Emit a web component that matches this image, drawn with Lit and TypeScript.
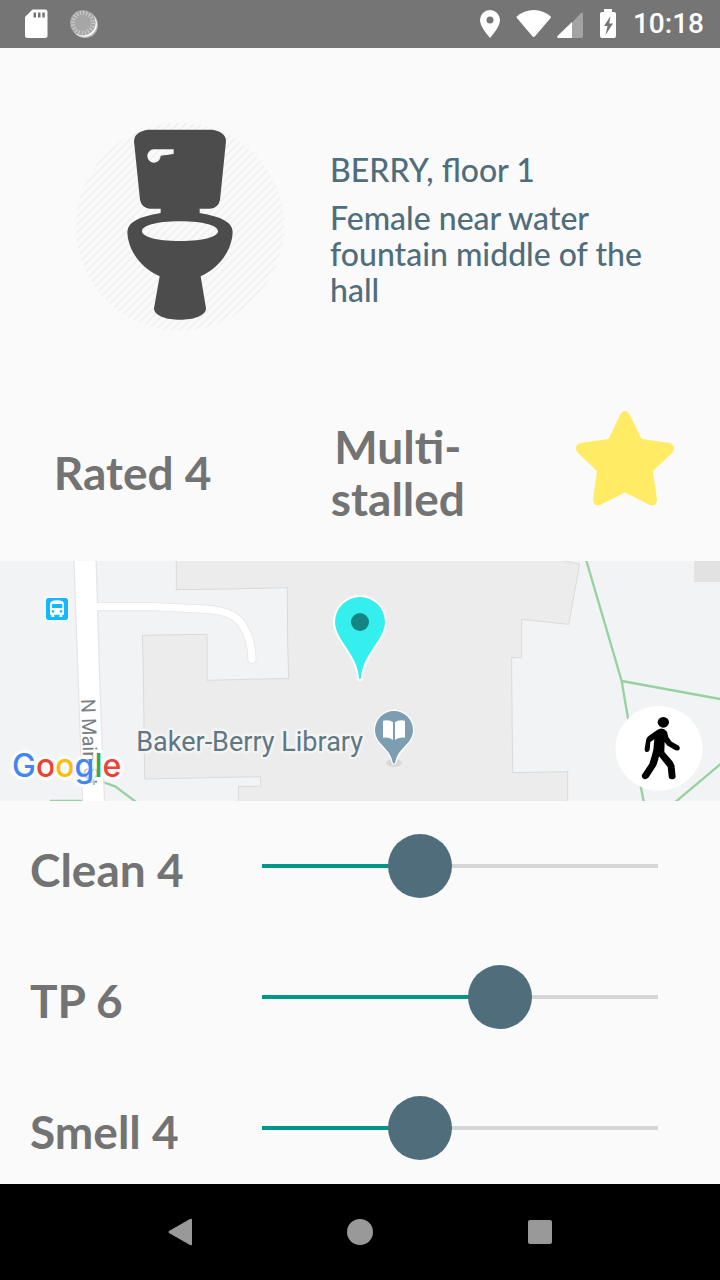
import { LitElement, html, css } from "lit";
import { customElement, property, state } from "lit/decorators.js";

@customElement("status-bar")
class StatusBar extends LitElement {
  static styles = css`
    :host {
      display: flex;
      align-items: center;
      height: 48px;
      flex: none;
      padding: 0 16px 0 24px;
      background: #757575;
      color: #fff;
      font: 500 28px/48px Roboto, sans-serif;
    }
    .group {
      display: flex;
      align-items: center;
    }
    .left {
      gap: 22px;
      flex: 1;
    }
    .signals {
      gap: 16px;
    }
    .network {
      display: flex;
      gap: 5px;
    }
    svg {
      display: block;
    }
  `;
  render() {
    return html`
      <div class="group left">
        <svg width="24" height="30" viewBox="0 0 24 30" fill="#fff">
          <path d="M8.500 0.500H21Q23.500 0.500 23.500 3V26.500Q23.500 29 21 29H3.500Q1 29 1 26.500V8Z" />
          <path d="M9.500 3.500h2.500v5H9.500zM14 3.500h2.500v5H14zM18.300 3.500h2.500v5h-2.500z" fill="#757575" />
        </svg>
        <svg width="28" height="30" viewBox="0 0 28 30">
          <circle cx="15" cy="16" r="13" fill="#bbb" />
          <circle cx="14" cy="15" r="12.800" fill="#fff" />
          <circle cx="12.800" cy="13.800" r="12.800" fill="#a6a6a6" />
          <circle cx="12.800" cy="13.800" r="10" fill="none" stroke="#d2d2d2" stroke-width="4" stroke-dasharray="1 2.142" />
        </svg>
      </div>
      <div class="group signals">
        <svg width="20" height="28" viewBox="0 0 20 28" fill="#fff">
          <path fill-rule="evenodd" d="M10 0A10 10 0 0 1 20 10C20 16 14 23 10 28C6 23 0 16 0 10A10 10 0 0 1 10 0ZM10 6.500a3.500 3.500 0 1 0 0 7a3.500 3.500 0 1 0 0-7Z" />
        </svg>
        <div class="network">
          <svg width="36" height="28" viewBox="0 0 36 28" fill="#fff">
            <path d="M0.800 6.500Q8 0 17.700 0T34.700 6.500Q35.300 7.200 34.600 8L19 26.300Q17.700 27.500 16.400 26.300L0.900 8Q0.200 7.200 0.800 6.500Z" />
          </svg>
          <svg width="26" height="28" viewBox="0 0 26 28">
            <path d="M15 12.500L24 3Q26 1.600 26 4V26Q26 28 24.500 28H15Z" fill="#a3a3a3" />
            <path d="M15 12V28H1Q-0.500 27.500 0.500 26Z" fill="#fff" />
          </svg>
        </div>
        <svg width="18" height="30" viewBox="0 0 18 30">
          <path d="M5 0H13V3H15Q17 3 17 5V27Q17 29 15 29H3Q1 29 1 27V5Q1 3 3 3H5Z" fill="#fff" />
          <path d="M11.500 7L5 17H8.500L6.500 26L14 14.500H10.200Z" fill="#757575" />
        </svg>
        <time>10:18</time>
      </div>
    `;
  }
}

@customElement("campus-map")
class CampusMap extends LitElement {
  static styles = css`
    :host {
      display: block;
      position: relative;
      height: 240px;
      overflow: hidden;
      background: #f2f3f5;
    }
    .map {
      display: block;
      width: 100%;
      height: 100%;
    }
    .place,
    .street,
    .brand {
      paint-order: stroke;
      stroke-linejoin: round;
    }
    .place {
      font: 400 27px Roboto, sans-serif;
      fill: #5f7784;
      stroke: #f4f4f4;
      stroke-width: 5px;
    }
    .street {
      font: 400 20px Roboto, sans-serif;
      fill: #7b8083;
      stroke: #fff;
      stroke-width: 3px;
    }
    .brand {
      font: 500 32px Inter, sans-serif;
      stroke: #fff;
      stroke-opacity: 0.6;
      stroke-width: 7px;
    }
    .walk {
      position: absolute;
      right: 17px;
      bottom: 10px;
      padding: 0;
      border: 0;
      background: none;
      cursor: pointer;
    }
    .walk svg {
      display: block;
    }
  `;
  render() {
    return html`
      <svg class="map" viewBox="0 0 720 240" preserveAspectRatio="xMidYMid slice" role="img" aria-label="Map of Baker-Berry Library">
        <g transform="scale(0.333333) translate(0 -18)">
          <path d="M529 10V104L678 102L825 99L862 98L863 260L866 370L621 376V238L427 241L430 342L434 672L782 665V694H715V750H1703V650L1538 653L1535 366V308H1565V193L1706 208L1739 27L1690 16Z" fill="#ececec" stroke="#d9dadb" stroke-width="3" />
          <path d="M2082 0H2170V81H2082Z" fill="#e2e2e2" />
          <g fill="none" stroke="#97d1a1" stroke-width="7">
            <path d="M1757 10L1865 378L1884 490L1932 745M1865 378L2170 434M2025 742L2170 620" />
            <path d="M150 738H250M300 678L345 694L410 742" />
          </g>
          <g fill="none" stroke-linecap="round">
            <path d="M280 155H460L625 163Q700 170 724 205Q756 250 756 313" stroke="#e5e6e8" stroke-width="27" />
            <path d="M221 0L234 360L248 745H314L300 400L288 0Z" fill="#fff" stroke="#e5e6e8" stroke-width="4" />
            <path d="M280 155H460L625 163Q700 170 724 205Q756 250 756 313" stroke="#fff" stroke-width="22" />
          </g>
          <rect x="134" y="125" width="74" height="74" rx="12" fill="#fff" />
          <rect x="138" y="129" width="66" height="66" rx="7" fill="#13b9ff" />
          <path fill-rule="evenodd" fill="#fff" d="M150 148Q150 136 171 136T192 148V179H187V186H178V179H163V186H154V179H150ZM156 147V159H187V147ZM159 165a4 4 0 1 0 .1 0ZM183 165a4 4 0 1 0 .1 0Z" />
          <ellipse cx="1182" cy="624" rx="24" ry="12" fill="#d9d9d9" />
          <path d="M1182 468A57 57 0 0 1 1239 525C1239 568 1193 578 1186 622Q1182 630 1178 622C1171 578 1125 568 1125 525A57 57 0 0 1 1182 468Z" fill="#7c9eb0" stroke="#fff" stroke-width="7" paint-order="stroke" />
          <path d="M1149 497Q1169 493 1179 502V555Q1169 545 1149 548ZM1215 497Q1195 493 1185 502V555Q1195 545 1215 548Z" fill="#fff" />
          <path d="M1080 126A75 75 0 0 1 1155 201C1155 254 1085 300 1083 371H1077C1075 300 1005 254 1005 201A75 75 0 0 1 1080 126Z" fill="#35eeee" stroke="#fff" stroke-width="12" stroke-linejoin="round" paint-order="stroke" />
          <circle cx="1080" cy="201" r="27" fill="#138583" />
        </g>
        <text class="street" transform="translate(81 138) rotate(88)">N Main St</text>
        <text class="place" x="363" y="190" text-anchor="end">Baker-Berry Library</text>
        <text class="brand" x="12" y="216"><tspan fill="#4285f4">G</tspan><tspan fill="#ea4335">o</tspan><tspan fill="#fbbc05">o</tspan><tspan fill="#4285f4">g</tspan><tspan fill="#34a853">l</tspan><tspan fill="#ea4335">e</tspan></text>
      </svg>
      <button class="walk" aria-label="Walking directions">
        <svg width="88" height="85" viewBox="766 452 264 255">
          <ellipse cx="898" cy="579" rx="131" ry="127" fill="#fff" />
          <ellipse cx="911" cy="501" rx="17" ry="16" />
          <path d="M887 528Q907 510 922 529L926 546L936 559L957 571Q964 578 957 585Q950 587 942 582L922 570L915 560L914 590L935 614Q944 625 945 635L948 664Q946 672 936 672Q927 672 927 663L924 635L898 603Q895 619 889 632L867 666Q862 673 853 671Q844 667 847 658L869 625L876 603L881 583L884 552L872 560L870 584Q867 591 860 590Q854 588 855 580L860 551Q862 545 870 540Z" />
        </svg>
      </button>
    `;
  }
}

@customElement("rating-row")
class RatingRow extends LitElement {
  @property() label = "";
  @property({ type: Number }) value = 0;
  static styles = css`
    :host {
      display: grid;
      grid-template-columns: 200px 1fr;
      align-items: center;
      box-sizing: border-box;
      height: 131px;
      padding: 0 30px 2px;
    }
    label {
      padding-top: 8px;
      font: 700 46px/52px Lato, sans-serif;
      color: #737373;
      white-space: nowrap;
    }
    input {
      -webkit-appearance: none;
      appearance: none;
      display: block;
      width: 100%;
      height: 64px;
      margin: 0;
      background: linear-gradient(to right, #009688 var(--fill), #d6d6d6 var(--fill)) center / calc(100% - 64px) 4px no-repeat;
    }
    input::-webkit-slider-thumb {
      -webkit-appearance: none;
      width: 64px;
      height: 64px;
      border-radius: 50%;
      background: #506d7b;
    }
  `;
  render() {
    return html`
      <label for="range">${this.label} ${this.value}</label>
      <input
        id="range"
        type="range"
        min="0"
        max="10"
        .value=${String(this.value)}
        style="--fill: ${this.value * 10}%"
        @input=${(e: Event) => (this.value = Number((e.target as HTMLInputElement).value))}
      />
    `;
  }
}

@customElement("app-root")
class AppRoot extends LitElement {
  @state() favorite = true;
  @state() ratings = [
    { label: "Clean", value: 4 },
    { label: "TP", value: 6 },
    { label: "Smell", value: 4 },
  ];
  static styles = css`
    :host {
      display: flex;
      flex-direction: column;
      height: 100vh;
      background: #fafafa;
      font-family: Lato, sans-serif;
    }
    main {
      flex: 1;
      min-height: 0;
      overflow-y: auto;
      scrollbar-width: none;
    }
    .hero {
      display: grid;
      grid-template-columns: 1fr 1fr;
      padding: 62px 0 56px;
    }
    .hero svg {
      display: block;
      justify-self: center;
    }
    .info {
      padding: 42px 30px 0 0;
      margin-left: -30px;
      color: #506d7b;
      font: 500 32px/36px "Lato Medium", Lato, sans-serif;
    }
    h1 {
      margin: 0 0 12px;
      font: inherit;
    }
    p {
      margin: 0;
    }
    .facts {
      display: grid;
      grid-template-columns: 7fr 7fr 5fr;
      align-items: center;
      justify-items: center;
      box-sizing: border-box;
      padding: 0 0 12px;
      height: 165px;
      font: 700 46px/52px Lato, sans-serif;
      color: #737373;
      text-align: center;
    }
    .star {
      display: block;
      padding: 0 0 28px;
      border: 0;
      background: none;
      cursor: pointer;
    }
    .star svg {
      display: block;
    }
    nav {
      display: grid;
      grid-template-columns: repeat(3, 180px);
      justify-content: center;
      height: 96px;
      flex: none;
      background: #000;
    }
    nav button {
      display: grid;
      place-items: center;
      padding: 0;
      border: 0;
      background: none;
    }
  `;
  render() {
    return html`
      <status-bar></status-bar>
      <main>
        <section class="hero">
          <svg width="230" height="230" viewBox="-15 0 690 690" role="img" aria-label="Toilet">
            <defs>
              <pattern id="hatch" width="17" height="17" patternUnits="userSpaceOnUse" patternTransform="rotate(45)">
                <rect width="5" height="17" fill="#f0f0f0" />
              </pattern>
            </defs>
            <circle cx="330" cy="350" r="312" fill="url(#hatch)" />
            <path fill="#4c4c4c" fill-rule="evenodd" d="M235 59H425Q468 65 468 94L450 270Q444 295 420 296H389V309Q488 325 488 365C486 420 450 472 392 499L408 595C408 641 252 641 252 595L269 499C210 472 174 420 172 365Q172 325 272 309V296H240Q216 295 210 270L192 94Q192 65 235 59ZM251 118A20 20 0 1 0 272 137L311 132V118ZM330 334C178 334 178 393 330 393S482 334 330 334Z" />
          </svg>
          <div class="info">
            <h1>BERRY, floor 1</h1>
            <p>Female near water fountain middle of the hall</p>
          </div>
        </section>
        <section class="facts">
          <span>Rated 4</span>
          <span>Multi-<br />stalled</span>
          <button class="star" aria-label="Favorite" aria-pressed=${this.favorite} @click=${() => (this.favorite = !this.favorite)}>
            <svg width="100" height="97" viewBox="0 0 100 97">
              <path d="M45.500 4Q50 -2 54.500 4L66.500 29L95 33Q101 36 98 42L78 61L82 90Q81 97 75 95L50 82.500L25 95Q19 97 18 90L22 61L2 42Q-1 36 5 33L33.500 29Z" fill=${this.favorite ? "#ffeb64" : "#d6d6d6"} />
            </svg>
          </button>
        </section>
        <campus-map></campus-map>
        ${this.ratings.map((r) => html`<rating-row .label=${r.label} .value=${r.value}></rating-row>`)}
      </main>
      <nav aria-label="System">
        <button aria-label="Back">
          <svg width="24" height="28" viewBox="0 0 24 28"><path d="M22 1Q24 0 24 2V26Q24 28 22 27L1 15Q0 14 1 13Z" fill="#999" /></svg>
        </button>
        <button aria-label="Home">
          <svg width="26" height="26" viewBox="0 0 26 26"><circle cx="13" cy="13" r="13" fill="#999" /></svg>
        </button>
        <button aria-label="Recent apps">
          <svg width="26" height="26" viewBox="0 0 26 26"><rect x="1" y="1" width="24" height="24" rx="2" fill="#999" /></svg>
        </button>
      </nav>
    `;
  }
}
